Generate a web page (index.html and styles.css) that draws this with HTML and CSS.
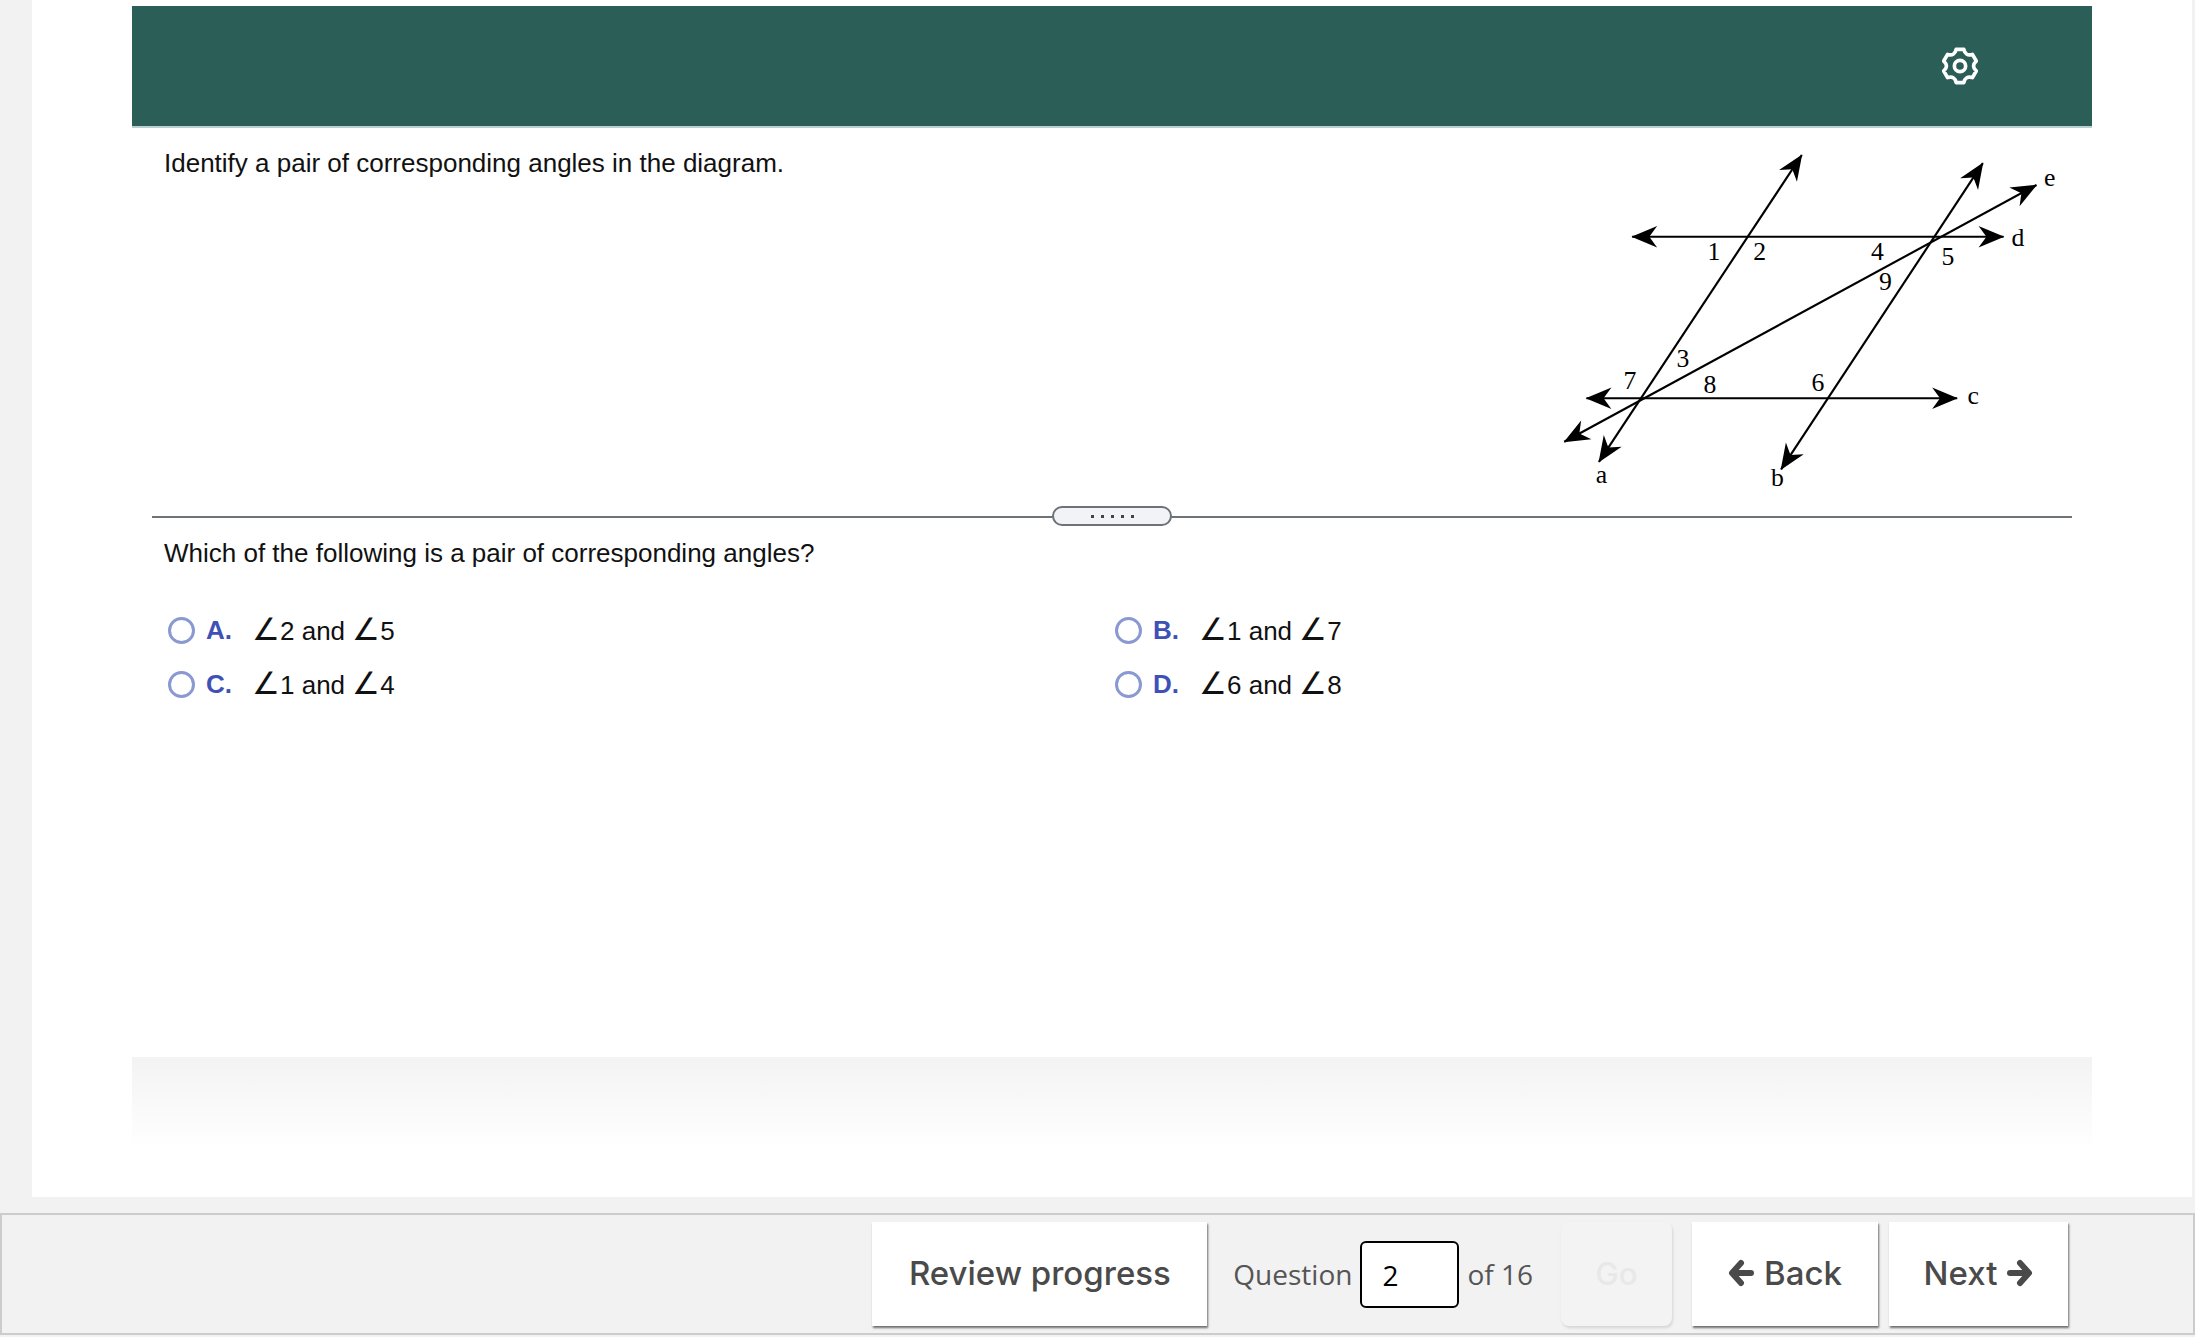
FILE: index.html
```html
<!DOCTYPE html>
<html lang="en">
<head>
  <meta charset="UTF-8">
  <title>Question 2 of 16</title>
  <link rel="stylesheet" href="styles.css">
</head>
<body>

<div class="panel">
  <div class="top-bar">
    <svg class="gear" viewBox="0 0 24 24" fill="none" stroke="#fff" stroke-width="2.2" stroke-linejoin="round">
      <path d="M9.7 2.06 L14.3 2.06 Q15.25 6.37 19.46 5.04 L21.75 9.02 Q18.5 12 21.75 14.98 L19.46 18.96 Q15.25 17.63 14.3 21.94 L9.7 21.94 Q8.75 17.63 4.54 18.96 L2.25 14.98 Q5.5 12 2.25 9.02 L4.54 5.04 Q8.75 6.37 9.7 2.06 Z"/>
      <circle cx="12" cy="12" r="3.4"/>
    </svg>
  </div>

  <div class="stem">
    <p class="stem-text">Identify a pair of corresponding angles in the diagram.</p>

    <svg class="diagram" viewBox="0 0 1484 1036">
      <defs>
        <marker id="head" viewBox="-74 -32 76 64" refX="-2" refY="0" markerWidth="76" markerHeight="64" markerUnits="userSpaceOnUse" orient="auto-start-reverse">
          <path d="M0,0 L-72,-30 L-50,0 L-72,30 Z" fill="#000"/>
        </marker>
      </defs>
      <g stroke="#000" stroke-width="6" marker-start="url(#head)" marker-end="url(#head)">
        <line x1="258" y1="299" x2="1298" y2="299"/>
        <line x1="130" y1="751" x2="1168" y2="751"/>
        <line x1="165" y1="929" x2="733" y2="70"/>
        <line x1="675" y1="950" x2="1240" y2="93"/>
        <line x1="68" y1="873" x2="1390" y2="154"/>
      </g>
      <g class="diagram-labels">
        <text x="487" y="365">1</text>
        <text x="615" y="365">2</text>
        <text x="945" y="363">4</text>
        <text x="1142" y="377">5</text>
        <text x="967" y="449">9</text>
        <text x="400" y="663">3</text>
        <text x="252" y="725">7</text>
        <text x="476" y="735">8</text>
        <text x="778" y="732">6</text>
        <text x="172" y="988">a</text>
        <text x="665" y="998">b</text>
        <text x="1213" y="767">c</text>
        <text x="1338" y="326">d</text>
        <text x="1427" y="156">e</text>
      </g>
    </svg>
  </div>

  <div class="divider">
    <div class="handle">
      <span></span><span></span><span></span><span></span><span></span>
    </div>
  </div>

  <div class="question">
    <p class="question-text">Which of the following is a pair of corresponding angles?</p>
    <div class="choices">
      <label class="choice"><input type="radio" name="answer"><b>A.</b><span><i class="ang">∠</i>2 and <i class="ang">∠</i>5</span></label>
      <label class="choice"><input type="radio" name="answer"><b>B.</b><span><i class="ang">∠</i>1 and <i class="ang">∠</i>7</span></label>
      <label class="choice"><input type="radio" name="answer"><b>C.</b><span><i class="ang">∠</i>1 and <i class="ang">∠</i>4</span></label>
      <label class="choice"><input type="radio" name="answer"><b>D.</b><span><i class="ang">∠</i>6 and <i class="ang">∠</i>8</span></label>
    </div>
  </div>

  <div class="fade"></div>
</div>

<div class="footer">
  <button class="btn btn-review">Review progress</button>
  <div class="goto">
    <span>Question</span>
    <input class="goto-input" type="text" value="2">
    <span>of 16</span>
  </div>
  <button class="btn btn-go" disabled>Go</button>
  <button class="btn btn-back">
    <svg class="arrow" viewBox="0 0 26 28"><path d="M13 4 L4 14 L13 24 M6 14 H23" fill="none" stroke="#4a4a4a" stroke-width="6" stroke-linecap="round" stroke-linejoin="round"/></svg>
    Back
  </button>
  <button class="btn btn-next">
    Next
    <svg class="arrow" viewBox="0 0 26 28"><path d="M13 4 L22 14 L13 24 M20 14 H3" fill="none" stroke="#4a4a4a" stroke-width="6" stroke-linecap="round" stroke-linejoin="round"/></svg>
  </button>
</div>

</body>
</html>
```

FILE: styles.css
```css
* {
  box-sizing: border-box;
}

html, body {
  margin: 0;
  height: 100%;
}

body {
  background: #f2f2f2;
  font-family: "Liberation Sans", Arial, sans-serif;
  color: #111;
  overflow: hidden;
}

p {
  margin: 0;
}

.panel {
  display: flex;
  flex-direction: column;
  height: 1197px;
  margin: 0 3px 0 32px;
  padding: 6px 100px 0;
  background: #fff;
}

.top-bar {
  display: flex;
  justify-content: flex-end;
  align-items: center;
  height: 122px;
  padding-right: 112px;
  background: #2b5e57;
  border-bottom: 2px solid #b9d0d3;
}

.gear {
  width: 40px;
  height: 40px;
}

.stem {
  display: flex;
  justify-content: space-between;
  height: 388px;
  padding: 2px 22px 0 32px;
}

.stem-text {
  padding-top: 18px;
  font-size: 26px;
  line-height: 30px;
}

.diagram {
  width: 530px;
  height: 370px;
}

.diagram-labels text {
  font-family: "Liberation Serif", "Times New Roman", serif;
  font-size: 72px;
  text-anchor: middle;
  fill: #000;
}

.divider {
  display: flex;
  justify-content: center;
  align-items: center;
  height: 2px;
  margin: 0 20px;
  background: #6e737a;
}

.handle {
  display: flex;
  flex-shrink: 0;
  justify-content: center;
  align-items: center;
  gap: 7px;
  width: 120px;
  height: 20px;
  margin-top: -2px;
  background: #f1f3f7;
  border: 2px solid #6e737a;
  border-radius: 10px;
}

.handle span {
  width: 3px;
  height: 3px;
  background: #444;
}

.question {
  flex: 1;
  padding: 20px 32px 0;
}

.question-text {
  font-size: 26px;
  line-height: 30px;
}

.choices {
  display: grid;
  grid-template-columns: 947px 1fr;
  grid-auto-rows: 54px;
  margin-top: 35px;
}

.choice {
  display: flex;
  align-items: center;
  font-size: 26px;
}

.choice input {
  appearance: none;
  width: 27px;
  height: 27px;
  margin: 0 0 0 4px;
  background: #fff;
  border: 3px solid #8a99d2;
  border-radius: 50%;
}

.choice b {
  width: 46px;
  margin-left: 11px;
  color: #3f51b5;
}

.ang {
  font-size: 31px;
  font-style: normal;
  line-height: 1;
}

.fade {
  height: 93px;
  margin-bottom: 47px;
  background: linear-gradient(#f3f3f3, #fff);
}

.footer {
  display: flex;
  justify-content: flex-end;
  align-items: center;
  height: 122px;
  margin-top: 16px;
  padding-right: 125px;
  background: #f2f2f2;
  border: 2px solid #cccccc;
  font-family: "Open Sans", sans-serif;
}

.btn {
  display: flex;
  justify-content: center;
  align-items: center;
  gap: 10px;
  height: 104px;
  padding: 0 0 2px;
  background: #fff;
  border: none;
  box-shadow: 1px 2px 2px rgba(0,0,0,0.55);
  color: #4a4a4a;
  font-family: Inter, sans-serif;
  font-size: 33px;
  font-weight: 500;
}

.btn-review {
  width: 335px;
}

.btn-go {
  width: 111px;
  margin-left: 28px;
  background: #f3f3f3;
  border-radius: 8px;
  box-shadow: 1px 2px 3px rgba(0,0,0,0.12);
  color: #e8e8e8;
  font-size: 31px;
}

.btn-back {
  width: 186px;
  margin-left: 20px;
}

.btn-next {
  width: 179px;
  margin-left: 11px;
}

.arrow {
  width: 26px;
  height: 28px;
}

.goto {
  display: flex;
  align-items: center;
  gap: 8px;
  margin-left: 26px;
  color: #555;
  font-size: 28px;
}

.goto-input {
  width: 99px;
  height: 67px;
  padding: 2px 0 0 20px;
  background: #fff;
  border: 2px solid #000;
  border-radius: 6px;
  color: #000;
  font-family: "Open Sans", sans-serif;
  font-size: 28px;
}
```
